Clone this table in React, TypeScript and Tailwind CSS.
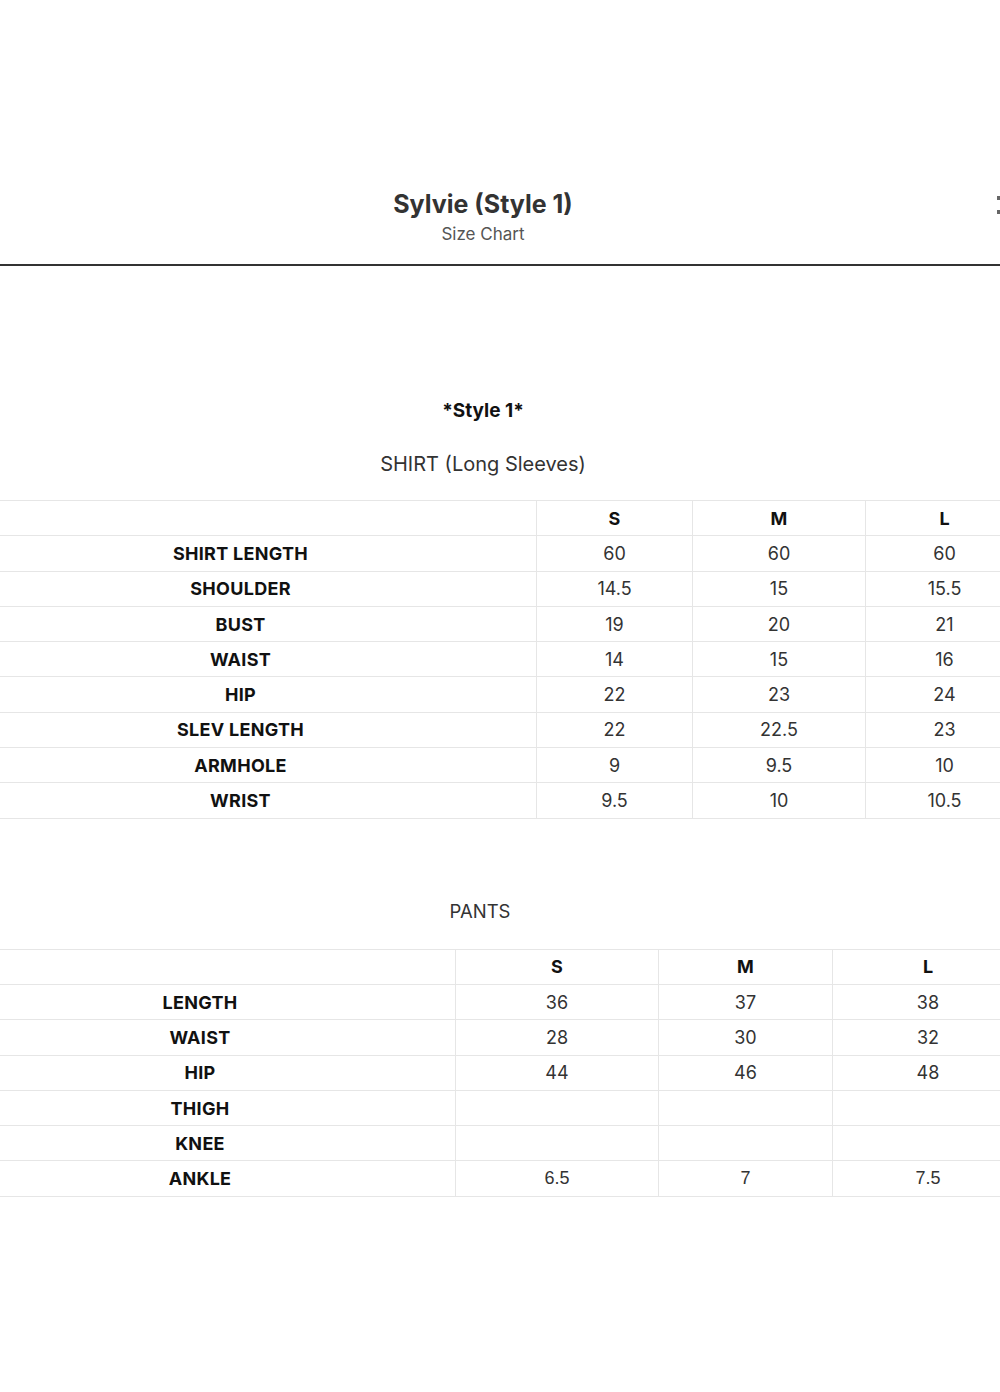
import React from "react";

const shirt = [
  ["SHIRT LENGTH", "60", "60", "60"],
  ["SHOULDER", "14.5", "15", "15.5"],
  ["BUST", "19", "20", "21"],
  ["WAIST", "14", "15", "16"],
  ["HIP", "22", "23", "24"],
  ["SLEV LENGTH", "22", "22.5", "23"],
  ["ARMHOLE", "9", "9.5", "10"],
  ["WRIST", "9.5", "10", "10.5"],
];

const pants = [
  ["LENGTH", "36", "37", "38"],
  ["WAIST", "28", "30", "32"],
  ["HIP", "44", "46", "48"],
  ["THIGH", "", "", ""],
  ["KNEE", "", "", ""],
  ["ANKLE", "6.5", "7", "7.5"],
];

function SizeTable({ rows, cols, arial }: { rows: string[][]; cols: number[]; arial?: boolean }) {
  return (
    <table className="border-collapse table-fixed w-[1079px] -ml-[56px]">
      <colgroup>
        {cols.map((w, i) => (
          <col key={i} style={{ width: w }} />
        ))}
      </colgroup>
      <thead>
        <tr>
          <th className="h-[35.3px] p-0 border border-[#e6e6e6]"></th>
          {["S", "M", "L"].map((s) => (
            <th key={s} className="h-[35.3px] p-0 border border-[#e6e6e6] text-[18px] font-bold text-[#111]">
              {s}
            </th>
          ))}
        </tr>
      </thead>
      <tbody>
        {rows.map((r, i) => (
          <tr key={i}>
            <td className="h-[35.3px] p-0 border border-[#e6e6e6] text-center text-[18px] font-bold tracking-[0.3px] text-[#111]">
              {r[0]}
            </td>
            {r.slice(1).map((v, j) => (
              <td
                key={j}
                className={
                  "h-[35.3px] p-0 border border-[#e6e6e6] text-center text-[18px] text-[#333] " +
                  (arial && i === rows.length - 1 ? "font-['Liberation_Sans',sans-serif]" : "")
                }
              >
                {v}
              </td>
            ))}
          </tr>
        ))}
      </tbody>
    </table>
  );
}

export default function App() {
  return (
    <div className="relative w-[1000px] h-[1392px] overflow-hidden bg-white font-['Inter',sans-serif]">
      <div className="w-[966px] pt-[188px] flex flex-col items-center">
        <h1 className="text-[25px] leading-[32px] font-bold text-[#333]">Sylvie (Style 1)</h1>
        <p className="text-[17px] leading-[20px] text-[#555] mt-[4px]">Size Chart</p>
      </div>
      <div className="absolute right-0 top-[196px] w-[3px] h-[18px] flex flex-col justify-between">
        <span className="w-[3px] h-[4px] bg-[#666]"></span>
        <span className="w-[3px] h-[4px] bg-[#666]"></span>
      </div>
      <div className="mt-[20px] h-[2px] bg-[#333]"></div>

      <div className="w-[966px] mt-[133px] flex flex-col items-center">
        <p className="text-[19px] leading-[24px] font-bold text-[#111]">*Style 1*</p>
        <p className="text-[20px] leading-[24px] text-[#333] mt-[29px]">SHIRT (Long Sleeves)</p>
      </div>
      <div className="mt-[24px]">
        <SizeTable rows={shirt} cols={[592, 156, 173, 158]} />
      </div>

      <div className="w-[960px] mt-[80px] flex justify-center">
        <p className="text-[18.5px] leading-[24px] text-[#333]">PANTS</p>
      </div>
      <div className="mt-[26px]">
        <SizeTable rows={pants} cols={[511, 203, 174, 191]} arial />
      </div>
    </div>
  );
}
